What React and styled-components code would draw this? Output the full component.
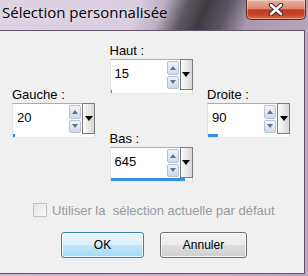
import React from "react";
import styled, { createGlobalStyle } from "styled-components";

const GlobalStyle = createGlobalStyle`
  html, body {
    margin: 0;
    padding: 0;
    background: #ffffff;
  }
  body {
    font-family: "Liberation Sans", Arial, sans-serif;
  }
  * {
    box-sizing: border-box;
  }
`;

const Window = styled.div`
  width: 308px;
  height: 276px;
  display: flex;
  flex-direction: column;
  overflow: hidden;
  background: linear-gradient(to right, #c9bccd, #b9a8be);
`;

const TitleBar = styled.div`
  height: 30px;
  flex: none;
  display: flex;
  justify-content: space-between;
  align-items: flex-start;
  background: linear-gradient(
    112deg,
    #ddd3e2 0%,
    #d8cddf 44%,
    #b9adbf 52%,
    #5d5860 59%,
    #3d3b40 65%,
    #5a5460 72%,
    #a998b0 80%,
    #b6a6bc 100%
  );
`;

const Title = styled.span`
  font-family: "Open Sans", "Noto Sans", sans-serif;
  font-size: 15px;
  line-height: 20px;
  padding: 2px 0 0 2px;
  color: #000000;
  text-shadow: 0 0 6px rgba(255, 255, 255, 0.7);
`;

const CloseButton = styled.div`
  width: 60px;
  height: 20px;
  margin-right: 2px;
  display: flex;
  align-items: center;
  justify-content: center;
  border: 1px solid #5b2b2b;
  border-top: none;
  border-radius: 0 0 5px 5px;
  background: linear-gradient(
    #e9b2a3 0%,
    #d98770 45%,
    #c33a1e 52%,
    #c7442a 78%,
    #de7048 100%
  );
  box-shadow: inset 0 0 0 1px rgba(255, 255, 255, 0.35);
`;

const Client = styled.div`
  flex: 1;
  margin: 0 3px 2px 0;
  background: #f0f0f0;
  border: 1px solid #5f5566;
  border-left: none;
`;

const Fields = styled.div`
  display: grid;
  grid-template-columns: 83px 83px 83px;
  column-gap: 14.5px;
  padding: 13px 0 0 12px;
  align-items: start;
`;

const Column = styled.div`
  display: flex;
  flex-direction: column;
  gap: 38px;
  margin-top: ${(p) => p.$offset || 0}px;
`;

const Field = styled.div`
  display: flex;
  flex-direction: column;
  gap: 1px;
`;

const Label = styled.span`
  font-size: 13px;
  line-height: 14px;
  color: #000000;
`;

const SpinBox = styled.div`
  height: 35px;
  display: flex;
  flex-direction: column;
  background: #ffffff;
  border: 1px solid;
  border-color: #abadb3 #dbdfe6 #e3e9ef #e2e3ea;
`;

const SpinRow = styled.div`
  flex: 1;
  display: flex;
`;

const Value = styled.span`
  flex: 1;
  font-size: 13px;
  line-height: 28px;
  padding-left: 4px;
  color: #000000;
`;

const Spinner = styled.div`
  width: 12px;
  display: flex;
  flex-direction: column;
  gap: 1px;
  padding: 1px 0;
`;

const SpinBtn = styled.div`
  flex: 1;
  display: flex;
  align-items: center;
  justify-content: center;
  border: 1px solid #b6c3d3;
  border-radius: 2px;
  background: linear-gradient(#f1f5fa, #cfd9e6);

  &::after {
    content: "";
    border-left: 3px solid transparent;
    border-right: 3px solid transparent;
    ${(p) =>
      p.$down
        ? "border-top: 4px solid #5f7190;"
        : "border-bottom: 4px solid #5f7190;"}
  }
`;

const Dropdown = styled.div`
  width: 13px;
  margin: -1px -1px 0 1px;
  display: flex;
  align-items: center;
  justify-content: center;
  border: 1px solid #7c7c7c;
  background: linear-gradient(to right, #fbfbfb, #d6d6d6);

  &::after {
    content: "";
    border-left: 4px solid transparent;
    border-right: 4px solid transparent;
    border-top: 5px solid #000000;
  }
`;

const Track = styled.div`
  height: 3px;
`;

const Fill = styled.div`
  height: 100%;
  background: #3590e6;
`;

const CheckRow = styled.label`
  display: flex;
  align-items: center;
  gap: 5px;
  margin-top: 21px;
  padding-left: 33px;
  height: 14px;
`;

const CheckBox = styled.span`
  width: 14px;
  height: 14px;
  border: 1px solid #c2c2c2;
  background: linear-gradient(135deg, #e4e4e4, #fafafa);
`;

const CheckText = styled.span`
  font-size: 13px;
  color: #9a9a9a;
  white-space: pre;
`;

const Buttons = styled.div`
  display: flex;
  gap: 16px;
  margin-top: 15px;
  padding-left: 61px;
`;

const Button = styled.button`
  width: ${(p) => p.$w}px;
  height: 26px;
  padding: 0;
  font-family: "Liberation Sans", Arial, sans-serif;
  font-size: 12px;
  color: #000000;
  border-radius: 3px;
  border: 1px solid ${(p) => (p.$primary ? "#3c7fb1" : "#707070")};
  background: ${(p) =>
    p.$primary
      ? "linear-gradient(#eaf6fd 0%, #d9f0fc 50%, #bee6fd 51%, #a7d9f5 100%)"
      : "linear-gradient(#f2f2f2 0%, #ebebeb 50%, #dddddd 51%, #cfcfcf 100%)"};
  box-shadow: inset 0 0 0 1px rgba(255, 255, 255, 0.7);
`;

const MAX = 700;

const Spin = ({ label, value }) => (
  <Field>
    <Label>{label}</Label>
    <SpinBox>
      <SpinRow>
        <Value>{value}</Value>
        <Spinner>
          <SpinBtn />
          <SpinBtn $down />
        </Spinner>
        <Dropdown />
      </SpinRow>
      <Track>
        <Fill style={{ width: `${Math.max(2, (value / MAX) * 100)}%` }} />
      </Track>
    </SpinBox>
  </Field>
);

const App = () => (
  <>
    <GlobalStyle />
    <Window>
      <TitleBar>
        <Title>Sélection personnalisée</Title>
        <CloseButton>
          <svg width="18" height="13" viewBox="0 0 18 13">
            <path d="M4 2 L14 11 M14 2 L4 11" stroke="#4a2020" strokeWidth="4.5" strokeLinecap="round" />
            <path d="M4 2 L14 11 M14 2 L4 11" stroke="#ffffff" strokeWidth="2.6" strokeLinecap="round" />
          </svg>
        </CloseButton>
      </TitleBar>
      <Client>
        <Fields>
          <Column $offset={44}>
            <Spin label="Gauche :" value={20} />
          </Column>
          <Column>
            <Spin label="Haut :" value={15} />
            <Spin label="Bas :" value={645} />
          </Column>
          <Column $offset={44}>
            <Spin label="Droite :" value={90} />
          </Column>
        </Fields>
        <CheckRow>
          <CheckBox />
          <CheckText>Utiliser la  sélection actuelle par défaut</CheckText>
        </CheckRow>
        <Buttons>
          <Button $primary $w={83}>OK</Button>
          <Button $w={87}>Annuler</Button>
        </Buttons>
      </Client>
    </Window>
  </>
);

export default App;
